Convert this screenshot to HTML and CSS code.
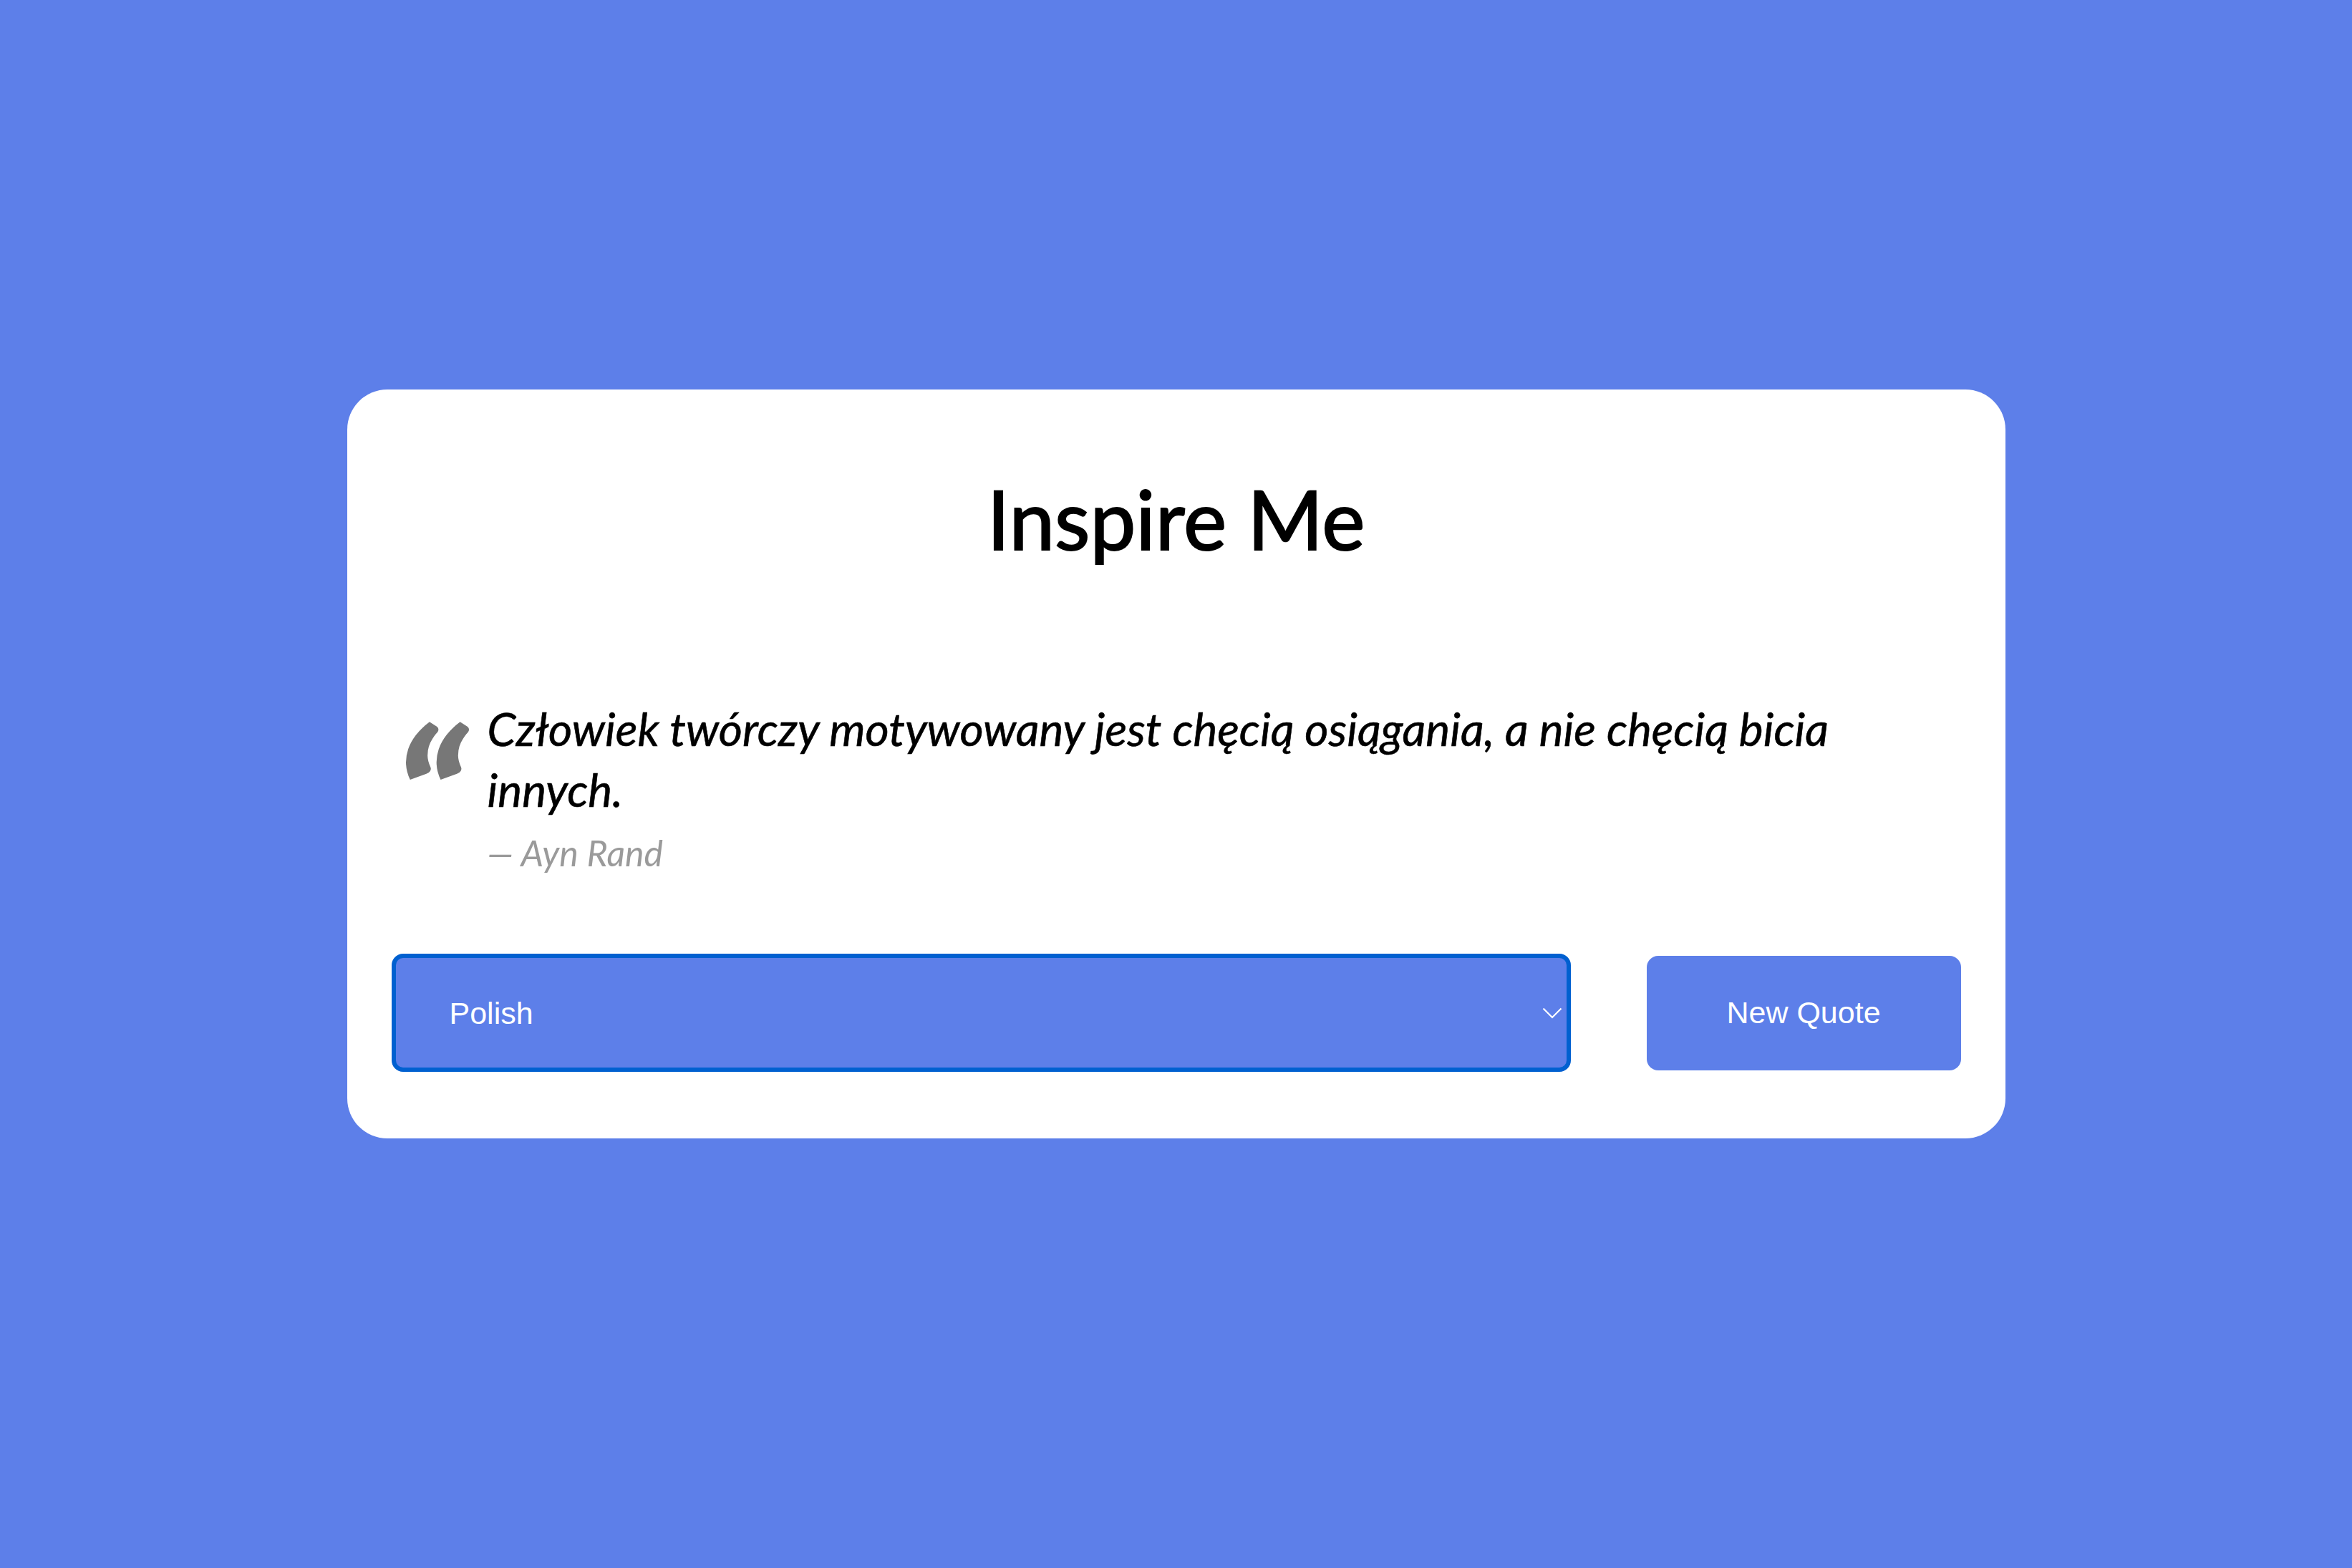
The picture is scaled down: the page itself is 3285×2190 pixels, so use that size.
FILE: index.html
```html
<!DOCTYPE html>
<html lang="pl">
<head>
<meta charset="utf-8">
<title>Inspire Me</title>
<link rel="stylesheet" href="styles.css">
</head>
<body>
<main class="page">
  <section class="card">
    <h1 class="title">Inspire Me</h1>
    <div class="quote">
      <span class="quote-mark">“</span>
      <div class="quote-body">
        <p class="quote-text">Człowiek twórczy motywowany jest chęcią osiągania, a nie chęcią bicia innych.</p>
        <p class="quote-author">— Ayn Rand</p>
      </div>
    </div>
    <div class="controls">
      <div class="select-wrap">
        <select class="lang-select">
          <option>Polish</option>
          <option>English</option>
        </select>
        <svg class="chevron" viewBox="0 0 28 16" width="28" height="16" aria-hidden="true">
          <polyline points="1.5,1.5 14,14 26.5,1.5" fill="none" stroke="#ffffff" stroke-width="2.2"/>
        </svg>
      </div>
      <button class="new-quote">New Quote</button>
    </div>
  </section>
</main>
</body>
</html>
```
FILE: styles.css
```css
html, body {
  margin: 0;
  padding: 0;
}
body {
  background: #5d7fe9;
  min-height: 2190px;
  font-family: "Lato", "Liberation Sans", sans-serif;
}
.page {
  display: flex;
  justify-content: center;
  padding-top: 544px;
}
.card {
  width: 2316px;
  box-sizing: border-box;
  background: #ffffff;
  border-radius: 56px;
  padding: 62px 62px 93px 62px;
}
.title {
  margin: 61px 0 0 0;
  text-align: center;
  font-size: 114px;
  line-height: 114px;
  font-weight: 400;
  color: #000000;
  -webkit-text-stroke: 2px #000000;
}
.quote {
  display: flex;
  margin-top: 194px;
  padding-left: 2px;
}
.quote-mark {
  display: block;
  flex: 0 0 132px;
  width: 132px;
  min-width: 0;
  height: 85px;
  overflow: visible;
  font-family: "Lato", sans-serif;
  font-style: italic;
  font-weight: 900;
  font-size: 270px;
  line-height: 283px;
  color: #777777;
}
.quote-body {
  flex: 1;
  min-width: 0;
}
.quote-text {
  margin: 0;
  max-width: 1950px;
  font-style: italic;
  font-size: 64px;
  line-height: 85px;
  color: #000000;
  -webkit-text-stroke: 0.6px #000000;
}
.quote-author {
  margin: 16px 0 0 0;
  font-style: italic;
  font-size: 50px;
  line-height: 60px;
  color: #9a9a9a;
}
.controls {
  display: flex;
  align-items: center;
  gap: 106px;
  margin-top: 111px;
}
.select-wrap {
  position: relative;
  flex: 1;
}
.lang-select {
  display: block;
  width: 100%;
  height: 165px;
  box-sizing: border-box;
  appearance: none;
  -webkit-appearance: none;
  background: #5d7fe9;
  border: 6px solid #0060d0;
  border-radius: 16px;
  color: #ffffff;
  font-family: "Liberation Sans", Arial, sans-serif;
  font-size: 43px;
  padding: 0 0 0 75px;
  outline: none;
}
.chevron {
  position: absolute;
  right: 12px;
  top: 75px;
}
.new-quote {
  flex: 0 0 439px;
  height: 160px;
  background: #5d7fe9;
  border: none;
  border-radius: 16px;
  color: #ffffff;
  font-family: "Liberation Sans", Arial, sans-serif;
  font-size: 43px;
  cursor: pointer;
}
```
